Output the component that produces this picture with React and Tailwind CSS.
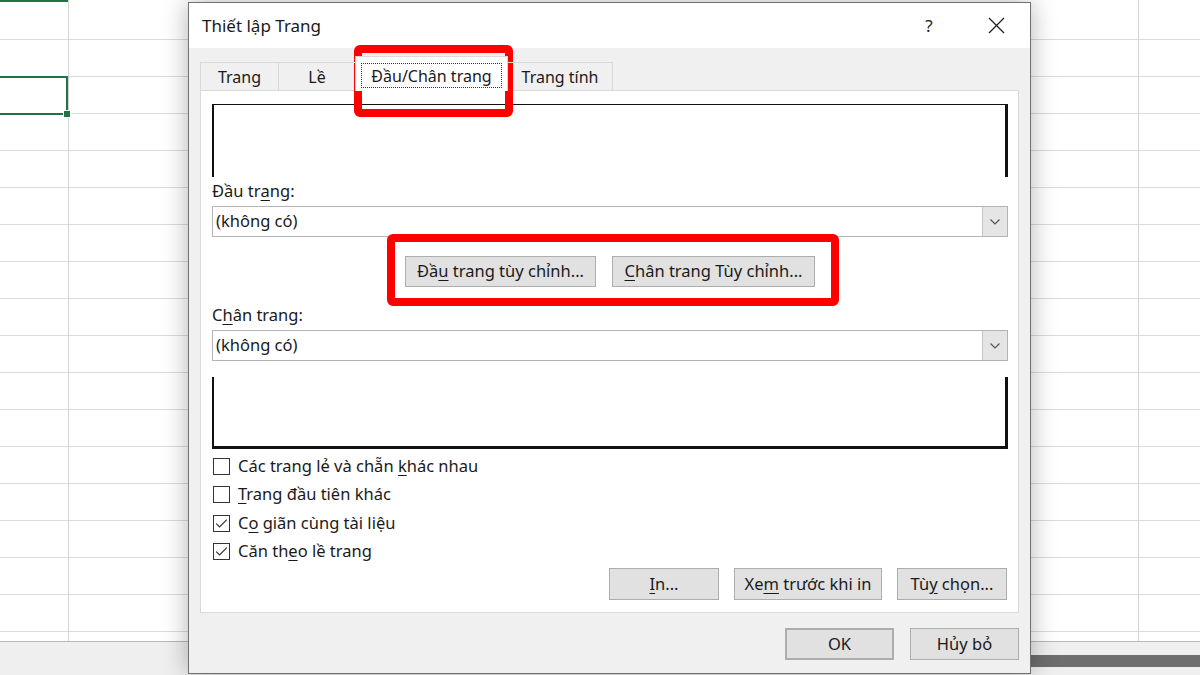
import React from 'react';

const U = ({ children }) => <span className="underline underline-offset-[3px] decoration-1">{children}</span>;

const Btn = ({ className = '', children }) => (
  <div className={`flex items-center justify-center border border-[#adadad] bg-[#e1e1e1] text-[16.5px] text-[#1a1a1a] ${className}`}>
    {children}
  </div>
);

const Chevron = () => (
  <svg width="12" height="8" viewBox="0 0 12 8">
    <path d="M1.5 1.5 L6 6 L10.5 1.5" fill="none" stroke="#555" strokeWidth="1.2" />
  </svg>
);

const Combo = () => (
  <div className="flex h-[31px] border border-[#b4b4b4] bg-white">
    <div className="flex flex-1 items-center pl-[3px] text-[16.5px] text-[#1a1a1a]">(không có)</div>
    <div className="flex w-[25px] items-center justify-center border-l border-[#c4c4c4] bg-[#e5e5e5]">
      <Chevron />
    </div>
  </div>
);

const Check = ({ checked, children }) => (
  <div className="flex h-[28.5px] items-center gap-[8px]">
    <div className="ml-[1px] flex h-[17px] w-[17px] items-center justify-center border border-[#333] bg-white">
      {checked && (
        <svg width="13" height="11" viewBox="0 0 13 11">
          <path d="M1.2 5.6 L4.6 9 L11.8 1.6" fill="none" stroke="#333" strokeWidth="1.2" />
        </svg>
      )}
    </div>
    <span className="text-[16.5px] text-[#1a1a1a]">{children}</span>
  </div>
);

const Tab = ({ w, children }) => (
  <div className={`flex h-[29px] ${w} items-center justify-center border-t border-r border-[#d9d9d9] text-[16px] text-[#1a1a1a]`}>
    {children}
  </div>
);

export default function App() {
  return (
    <div className="relative h-[675px] w-[1200px] overflow-hidden bg-white font-['Noto_Sans',sans-serif]">
      {/* spreadsheet behind the dialog */}
      <div className="flex h-[641px] bg-[image:repeating-linear-gradient(to_bottom,transparent_0px,transparent_36px,#dcdcdc_36px,#dcdcdc_37px)] bg-[position:0_3px]">
        <div className="flex w-[69px] flex-col border-r border-[#d4d4d4]">
          <div className="h-[2px] bg-[#217346]" />
          <div className="relative mt-[74px] h-[39px] border-2 border-l-0 border-[#217346]">
            <div className="absolute -bottom-[5px] -right-[5px] h-[8px] w-[8px] border border-white bg-[#217346]" />
          </div>
        </div>
        <div className="w-[1070px] border-r border-[#d4d4d4]" />
        <div className="flex-1" />
      </div>
      <div className="flex h-[34px] border-t border-[#b9b9b9] bg-[#efefef]">
        <div className="ml-auto mt-[13px] h-[12px] w-[175px] bg-[#6e6e6e]" />
      </div>

      {/* dialog */}
      <div className="absolute left-[188px] top-[2px] flex h-[672px] w-[843px] flex-col border border-[#707070] bg-[#f0f0f0] shadow-[0_0_24px_rgba(0,0,0,0.3)]">
        <div className="flex h-[45px] items-center bg-white pl-[13px] pr-[11px]">
          <div className="flex-1 text-[17px] text-[#1a1a1a]">Thiết lập Trang</div>
          <div className="flex w-[46px] justify-center text-[17px] text-[#222]">?</div>
          <div className="ml-[21px] flex w-[46px] justify-center">
            <svg width="17" height="17" viewBox="0 0 17 17">
              <path d="M1 1 L16 16 M16 1 L1 16" stroke="#222" strokeWidth="1.3" />
            </svg>
          </div>
        </div>

        <div className="flex flex-col px-[11px] pt-[8px]">
          <div className="relative z-10 -mb-px flex items-end">
            <div className="h-[29px] border-l border-[#d9d9d9]" />
            <Tab w="w-[78px]">Trang</Tab>
            <Tab w="w-[77px]">Lề</Tab>
            <div className="-ml-px flex h-[35px] w-[153px] items-start justify-center border-x border-t border-[#d9d9d9] bg-white pt-[6px]">
              <div className="flex h-[25px] w-[141px] items-center justify-center border border-dotted border-[#333] text-[16px] text-[#1a1a1a]">
                Đầu/Chân trang
              </div>
            </div>
            <Tab w="w-[105px]">Trang tính</Tab>
          </div>

          <div className="flex h-[523px] flex-col border border-[#d9d9d9] bg-white pl-[11px] pr-[10px] pt-[13px]">
            <div className="h-[73px] border-l-2 border-r-[3px] border-t border-[#111]" />
            <div className="flex h-[29px] items-center text-[16.5px] text-[#1a1a1a]">
              Đầu tr<U>a</U>ng:
            </div>
            <Combo />
            <div className="mt-[19px] flex justify-center">
              <div className="relative flex gap-[16px]">
                <Btn className="h-[31px] w-[191px]">
                  Đầ<U>u</U>&nbsp;trang tùy chỉnh...
                </Btn>
                <Btn className="h-[31px] w-[203px]">
                  <U>C</U>hân trang Tùy chỉnh...
                </Btn>
                <div className="absolute -bottom-[19px] -left-[18px] -right-[24px] -top-[22px] rounded-[6px] border-8 border-[#ff0000]" />
              </div>
            </div>
            <div className="mt-[13px] flex h-[30px] items-center text-[16.5px] text-[#1a1a1a]">
              C<U>h</U>ân trang:
            </div>
            <Combo />
            <div className="mt-[16px] h-[72px] border-b-[3px] border-l-2 border-r-[3px] border-[#111]" />
            <div className="mt-[3px] flex flex-col">
              <Check>
                Các trang lẻ và chẵn <U>k</U>hác nhau
              </Check>
              <Check>
                <U>T</U>rang đầu tiên khác
              </Check>
              <Check checked>
                C<U>o</U> giãn cùng tài liệu
              </Check>
              <Check checked>
                Căn th<U>e</U>o lề trang
              </Check>
            </div>
            <div className="mt-[2px] flex justify-end gap-[15px] pr-px">
              <Btn className="h-[32px] w-[110px]">
                <U>I</U>n...
              </Btn>
              <Btn className="h-[32px] w-[148px]">
                Xe<U>m</U>&nbsp;trước khi in
              </Btn>
              <Btn className="h-[32px] w-[110px]">
                Tù<U>y</U>&nbsp;chọn...
              </Btn>
            </div>
          </div>
        </div>

        <div className="mt-[15px] flex justify-end gap-[16px] pr-[11px]">
          <Btn className="h-[32px] w-[109px] border-2 border-[#3a7cae]">OK</Btn>
          <Btn className="h-[32px] w-[109px]">Hủy bỏ</Btn>
        </div>

        {/* annotation around the active tab */}
        <div className="absolute left-[165px] top-[42px] h-[72px] w-[159px] rounded-[6px] border-8 border-[#ff0000]" />
      </div>
    </div>
  );
}
